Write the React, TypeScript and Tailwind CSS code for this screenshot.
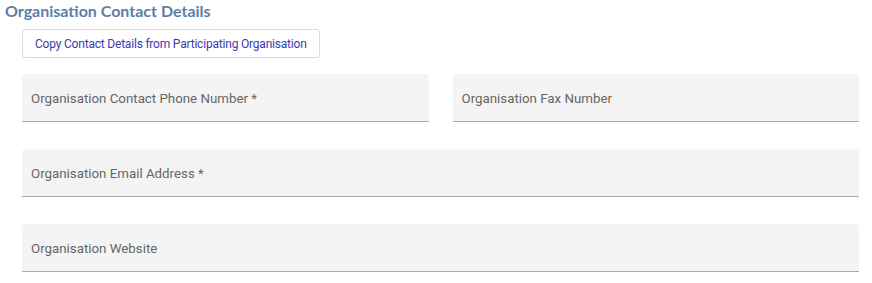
import React from "react";

function Field({ label, className = "" }: { label: string; className?: string }) {
  return (
    <div
      className={
        "h-[48px] bg-[#f4f4f4] rounded-t-[4px] border-b border-[#a9a9a9] flex items-center pl-[9px] pt-[2px] " +
        className
      }
    >
      <span className="text-[13.3px] text-[#666666] font-['Roboto',sans-serif]">{label}</span>
    </div>
  );
}

export default function App() {
  return (
    <div className="w-[872px] h-[283px] bg-white relative">
      <div className="pl-[5px] pt-[1px]">
        <h2 className="text-[16px] leading-[19px] font-bold text-[#5b7fa6] font-['Lato',sans-serif]">
          Organisation Contact Details
        </h2>
      </div>
      <div className="pl-[22px] pt-[9px]">
        <button className="h-[29px] px-[12px] border border-[#dcdcdc] rounded-[3px] bg-white text-[12px] tracking-[-0.2px] font-normal text-[#3b3bb0] font-['Roboto',sans-serif]">
          Copy Contact Details from Participating Organisation
        </button>
      </div>
      <div className="pl-[22px] pr-[13px] pt-[16px] flex flex-col gap-[27px]">
        <div className="flex gap-[24px]">
          <Field label="Organisation Contact Phone Number *" className="flex-1" />
          <Field label="Organisation Fax Number" className="flex-1" />
        </div>
        <Field label="Organisation Email Address *" />
        <Field label="Organisation Website" />
      </div>
    </div>
  );
}
